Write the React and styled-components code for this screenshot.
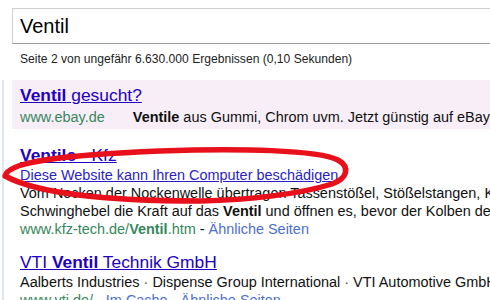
import React from "react";
import styled, { createGlobalStyle } from "styled-components";

const Global = createGlobalStyle`
  html, body { margin: 0; padding: 0; background: #fff; }
  body { font-family: "Liberation Sans", Arial, sans-serif; color: #000; overflow: hidden; }
`;

const Page = styled.div`
  position: relative;
  width: 490px;
  height: 300px;
  overflow: hidden;
  padding-top: 8px;
  box-sizing: border-box;
`;

const SearchBox = styled.div`
  margin-left: 12px;
  width: 520px;
  height: 36px;
  box-sizing: border-box;
  border: 1px solid #cfcfcf;
  border-bottom-color: #9c9c9c;
  padding-left: 7px;
  font-size: 20px;
  line-height: 34px;
  color: #000;
`;

const Stats = styled.div`
  margin-top: 7px;
  padding-left: 20px;
  font-size: 12.1px;
  line-height: 16px;
  color: #222;
  white-space: nowrap;
`;

const Results = styled.div`
  margin-top: 13px;
  margin-left: 2px;
  border-left: 2px solid #dde6f3;
`;

const Ad = styled.div`
  margin-left: 8px;
  padding: 4px 0 3px 8px;
  background: #f8eef8;
`;

const Result = styled.div`
  padding-left: 16px;
  margin-top: ${(p) => p.$top}px;
`;

const Title = styled.a`
  display: block;
  font-size: 17.4px;
  line-height: 22px;
  color: #2200c1;
  text-decoration: underline;
  white-space: nowrap;
  b { font-weight: bold; }
`;

const Line = styled.div`
  font-size: 14.45px;
  line-height: 18px;
  white-space: nowrap;
  color: #111;
  margin-top: ${(p) => p.$top || 0}px;
`;

const Url = styled.span`
  color: #37875d;
`;

const Snippet = styled.span`
  margin-left: 28px;
`;

const Warn = styled.a`
  color: #2a1fc4;
  text-decoration: underline;
`;

const More = styled.a`
  color: #4d6fcc;
  text-decoration: none;
`;

const Sep = styled.span`
  color: #555;
`;

const Ellipse = styled.svg`
  position: absolute;
  left: 0;
  top: 0;
  pointer-events: none;
`;

export default function App() {
  return (
    <>
      <Global />
      <Page>
        <SearchBox>Ventil</SearchBox>
        <Stats>Seite 2 von ungefähr 6.630.000 Ergebnissen (0,10 Sekunden)</Stats>
        <Results>
          <Ad>
            <Title><b>Ventil</b> gesucht?</Title>
            <Line $top={2}>
              <Url>www.ebay.de</Url>
              <Snippet><b>Ventile</b> aus Gummi, Chrom uvm. Jetzt günstig auf eBay</Snippet>
            </Line>
          </Ad>
          <Result $top={15}>
            <Title><b>Ventile</b> - Kfz</Title>
            <Line><Warn>Diese Website kann Ihren Computer beschädigen</Warn></Line>
            <Line>Vom Nocken der Nockenwelle übertragen Tassenstößel, Stößelstangen, Kipphebel oder</Line>
            <Line>Schwinghebel die Kraft auf das <b>Ventil</b> und öffnen es, bevor der Kolben den</Line>
            <Line>
              <Url>www.kfz-tech.de/<b>Ventil</b>.htm</Url> - <More>Ähnliche Seiten</More>
            </Line>
          </Result>
          <Result $top={13}>
            <Title>VTI <b>Ventil</b> Technik GmbH</Title>
            <Line>
              Aalberts Industries <Sep>·</Sep> Dispense Group International <Sep>·</Sep> VTI Automotive GmbH
            </Line>
            <Line>
              <Url>www.vti.de/</Url> - <More>Im Cache</More> - <More>Ähnliche Seiten</More>
            </Line>
          </Result>
        </Results>
        <Ellipse width="490" height="300" viewBox="0 0 490 300">
          <path
            d="M 5 176 C 8 162, 60 155, 160 151 C 240 148, 318 150, 338 160 C 350 167, 348 178, 332 184 C 300 194, 250 200, 200 201 C 120 201, 40 195, 5 176 Z"
            fill="none"
            stroke="#e8101a"
            strokeWidth="5.5"
            strokeLinejoin="round"
          />
        </Ellipse>
      </Page>
    </>
  );
}
